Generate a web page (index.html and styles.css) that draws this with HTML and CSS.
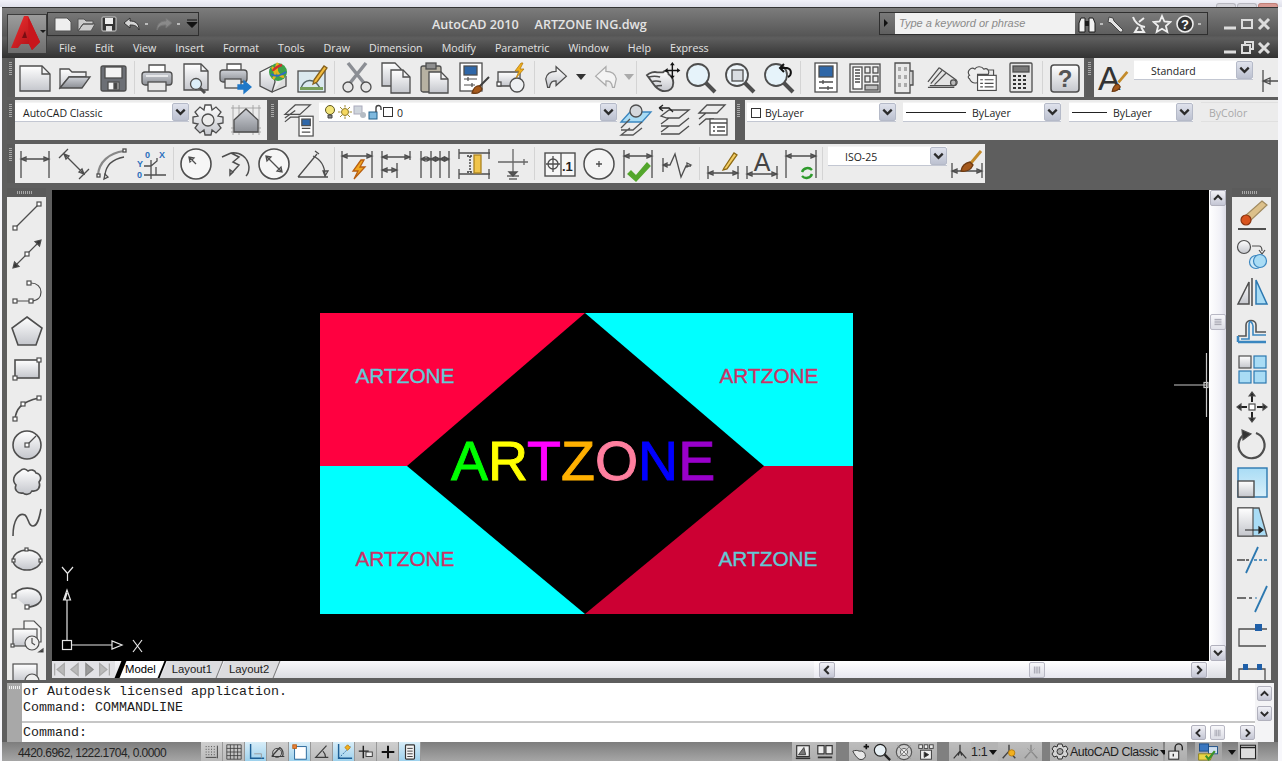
FILE: index.html
```html
<!DOCTYPE html>
<html lang="en">
<head>
<meta charset="utf-8">
<title>AutoCAD 2010 ARTZONE ING.dwg</title>
<link rel="stylesheet" href="styles.css">
</head>
<body>
<svg class="defs" width="0" height="0" aria-hidden="true">
  <defs>
    <linearGradient id="g" x1="0" y1="0" x2="0" y2="1"><stop offset="0" stop-color="#ffffff"/><stop offset="1" stop-color="#c4c6cc"/></linearGradient>
    <linearGradient id="gd" x1="0" y1="0" x2="0" y2="1"><stop offset="0" stop-color="#cfd2d8"/><stop offset="1" stop-color="#8b8e94"/></linearGradient>
    <linearGradient id="gb" x1="0" y1="0" x2="0" y2="1"><stop offset="0" stop-color="#a9dcf5"/><stop offset="1" stop-color="#d8effa"/></linearGradient>
    <linearGradient id="gr" x1="0" y1="0" x2="1" y2="1"><stop offset="0" stop-color="#f03030"/><stop offset="1" stop-color="#a30c14"/></linearGradient>
    <symbol id="cd" viewBox="0 0 16 16"><path d="M3.5 5.5L8 10l4.500-4.500" fill="none" stroke="#2b2b2b" stroke-width="2.400"/></symbol>
    <symbol id="cu" viewBox="0 0 16 16"><path d="M3.500 10L8 5.500 12.500 10" fill="none" stroke="#2b2b2b" stroke-width="2.400"/></symbol>
    <symbol id="cl" viewBox="0 0 16 16"><path d="M10 3.500L5.500 8l4.500 4.500" fill="none" stroke="#2b2b2b" stroke-width="2.400"/></symbol>
    <symbol id="cr" viewBox="0 0 16 16"><path d="M6 3.500L10.500 8 6 12.500" fill="none" stroke="#2b2b2b" stroke-width="2.400"/></symbol>
    <symbol id="th" viewBox="0 0 16 16"><path d="M5 4v8M7 4v8M9 4v8M11 4v8" fill="none" stroke="#9a9aa6" stroke-width="1"/></symbol>
    <symbol id="tv" viewBox="0 0 16 16"><path d="M4 5h8M4 7h8M4 9h8M4 11h8" fill="none" stroke="#9a9aa6" stroke-width="1"/></symbol>
  </defs>
</svg>

<div class="strip"><span class="peek"></span><span class="peek"></span><span class="peek red"></span></div>

<div class="window">
  <header class="titlebar">
    <div class="appbtn">
      <svg viewBox="0 0 40 38" width="40" height="38"><path d="M3 33L16 1h4l12 26-8 8-3-6h-8l-3 4z" fill="url(#gr)"/><path d="M20 1l12 26-8 8-3-6z" fill="#c8161c"/><path d="M14 23h5l-2-7z" fill="#7a0d12"/><path d="M32 15h6l-3 3z" fill="#1c1c1c"/></svg>
    </div>
    <div class="titlecol">
      <div class="titletop">
        <div class="qat">
          <svg viewBox="0 0 20 20" width="20" height="20"><path d="M2 4h12l4 4v9H2z" fill="#eee" stroke="#555"/></svg>
          <svg viewBox="0 0 20 20" width="20" height="20"><path d="M2 5h6l2 2h7v3H7l-5 7zM2 17l5-7h12l-4 7z" fill="#ccc" stroke="#555"/></svg>
          <svg viewBox="0 0 20 20" width="20" height="20"><rect x="3" y="3" width="14" height="14" rx="1" fill="#333" stroke="#ccc"/><rect x="6" y="4" width="8" height="6" fill="#eee"/><rect x="7" y="12" width="6" height="5" fill="#ddd"/></svg>
          <svg viewBox="0 0 20 20" width="20" height="20"><path d="M2 9l6-5v3c5 0 9 2 9 9-2-4-4-5-9-5v3z" fill="#d5d5d5" stroke="#333"/></svg>
          <span class="qdot"></span>
          <svg class="qgap" viewBox="0 0 20 20" width="20" height="20"><path d="M18 9l-6-5v3c-5 0-9 2-9 9 2-4 4-5 9-5v3z" fill="#8a8a8a" stroke="#777"/></svg>
          <span class="qdot"></span>
          <svg class="qgap" viewBox="0 0 12 20" width="12" height="20"><path d="M1 6h10M1 8.500h10l-5 5z" fill="#111" stroke="#111"/></svg>
        </div>
        <div class="doctitle"><span>AutoCAD 2010</span><span>ARTZONE ING.dwg</span></div>
        <div class="info">
          <span class="infoarrow"></span>
          <span class="infoinput">Type a keyword or phrase</span>
          <svg viewBox="0 0 20 20" width="20" height="20"><path d="M2 18V9l2-5h4v14zM12 18V4h4l2 5v9z" fill="#f2f2f2" stroke="#1c1c1c"/><path d="M8 7h4v5H8z" fill="#1c1c1c"/></svg>
          <span class="qdot"></span>
          <svg viewBox="0 0 20 20" width="20" height="20"><path d="M3 3l4 1 1 3 9 9-1 2-2 0-9-9-3-1z" fill="#e4e4e4" stroke="#444"/></svg>
          <svg viewBox="0 0 20 20" width="20" height="20"><path d="M4 3c2 6 6 9 12 10M10 8l5-4M9 13l-3 5h9l-3-5" fill="none" stroke="#eee" stroke-width="2"/></svg>
          <svg viewBox="0 0 20 20" width="20" height="20"><path d="M10 2l2.400 5.500 6 .5-4.500 4 1.400 6L10 14.800 4.700 18l1.400-6L1.600 8l6-.5z" fill="none" stroke="#f0f0f0" stroke-width="1.800"/></svg>
          <svg viewBox="0 0 20 20" width="20" height="20"><circle cx="10" cy="10" r="8" fill="#333" stroke="#eee" stroke-width="1.600"/><text x="10" y="14.500" class="qm">?</text></svg>
          <span class="qdot"></span>
        </div>
        <div class="winctl">
          <svg viewBox="0 0 14 14" width="14" height="14"><path d="M1 11h12" stroke="#ddd" stroke-width="3"/></svg>
          <svg viewBox="0 0 14 14" width="14" height="14"><rect x="2" y="3" width="10" height="8" fill="none" stroke="#ddd" stroke-width="2"/></svg>
          <svg viewBox="0 0 14 14" width="14" height="14"><path d="M2 2l10 10M12 2L2 12" stroke="#ddd" stroke-width="3"/></svg>
        </div>
      </div>
      <div class="titlebot">
        <nav class="menu"><span>File</span><span>Edit</span><span>View</span><span>Insert</span><span>Format</span><span>Tools</span><span>Draw</span><span>Dimension</span><span>Modify</span><span>Parametric</span><span>Window</span><span>Help</span><span>Express</span></nav>
        <div class="winctl low">
          <svg viewBox="0 0 14 14" width="14" height="14"><path d="M1 11h12" stroke="#ddd" stroke-width="3"/></svg>
          <svg viewBox="0 0 14 14" width="14" height="14"><path d="M5 3V1h8v7h-3M2 4h8v8H2z" fill="none" stroke="#ddd" stroke-width="2"/></svg>
          <svg viewBox="0 0 14 14" width="14" height="14"><path d="M2 2l10 10M12 2L2 12" stroke="#ddd" stroke-width="3"/></svg>
        </div>
      </div>
    </div>
  </header>

  <!-- Standard toolbar -->
  <div class="row r1">
    <span class="grip"></span>
    <div class="tb t1">
      <span class="b"><svg viewBox="0 0 32 32"><path d="M1 4h22l8 8v17H1z" fill="url(#g)"/><path d="M23 4v8h8"/></svg></span>
      <span class="b"><svg viewBox="0 0 32 32"><path d="M2 7h9l3 3h14v5H11L2 26z" fill="url(#g)"/><path d="M2 26l9-11h21l-8 11z" fill="url(#gd)"/></svg></span>
      <span class="b"><svg viewBox="0 0 32 32"><rect x="4" y="4" width="25" height="25" rx="2" fill="#6c6f75"/><rect x="8" y="5" width="17" height="11" fill="#f4f4f4"/><rect x="11" y="20" width="11" height="8" fill="#f4f4f4"/><rect x="17" y="21" width="3" height="6" fill="#444"/></svg></span>
      <span class="sep"></span>
      <span class="b"><svg viewBox="0 0 32 32"><path d="M8 10V3h16v7" fill="#fff"/><rect x="1" y="10" width="30" height="13" rx="3" fill="url(#gd)"/><rect x="7" y="20" width="18" height="9" fill="#e8e8e8"/><path d="M5 14h22" stroke="#fff"/></svg></span>
      <span class="b"><svg viewBox="0 0 32 32"><path d="M4 2h17l7 7v19H4z" fill="url(#g)"/><path d="M21 2v7h7"/><circle cx="16" cy="22" r="5.500" fill="#dceffa"/><path d="M20 26l5 5" stroke-width="3"/></svg></span>
      <span class="b"><svg viewBox="0 0 32 32"><path d="M8 8V2h14v6" fill="#fff"/><rect x="1" y="8" width="27" height="12" rx="3" fill="url(#gd)"/><rect x="6" y="17" width="16" height="9" fill="#e8e8e8"/><path d="M19 23h6v-4l7 6-7 6v-4h-6z" fill="#1f78c8" stroke="#1f78c8"/></svg></span>
      <span class="b"><svg viewBox="0 0 32 32"><path d="M2 10l12-6 3 16-3 10-12-6z" fill="url(#g)"/><path d="M14 30l14-6V14" fill="#ddd"/><circle cx="20" cy="10" r="9" fill="#3da14a" stroke="none"/><path d="M14 5c4 5 4 9 1 12M20 1c-3 5-2 12 6 14" stroke="#e5b21c" stroke-width="2.500"/><path d="M24 3c-5 1-9 5-9 6" stroke="#d0312d" stroke-width="2.500"/><path d="M13 12c5 3 9 2 15-2" stroke="#2c6cc4" stroke-width="2"/></svg></span>
      <span class="b"><svg viewBox="0 0 32 32"><rect x="1" y="9" width="27" height="21" fill="#dbe9ef"/><path d="M4 26c3-9 13-11 19 0" stroke="#566"/><rect x="3" y="25" width="23" height="3" fill="#78a05a" stroke="none"/><path d="M17 18L27 4l3 2-10 14-4 2z" fill="#f3bc3e" stroke="#85611c"/></svg></span>
      <span class="sep"></span>
      <span class="b"><svg viewBox="0 0 32 32"><path d="M25 1L9 21M7 1l16 20" stroke-width="3.500" stroke="#8b8e94"/><circle cx="7" cy="25" r="5" fill="#e5e5e5"/><circle cx="25" cy="25" r="5" fill="#e5e5e5"/></svg></span>
      <span class="b"><svg viewBox="0 0 32 32"><path d="M2 1h13l6 6v17H2z" fill="url(#g)"/><path d="M11 8h12l7 7v16H11z" fill="url(#g)"/><path d="M23 8v7h7"/></svg></span>
      <span class="b"><svg viewBox="0 0 32 32"><rect x="2" y="4" width="20" height="26" rx="2" fill="#b7b1a2"/><rect x="7" y="1" width="10" height="6" fill="#8f8f8f"/><path d="M10 10h12l7 7v14H10z" fill="url(#g)"/><path d="M22 10v7h7"/></svg></span>
      <span class="b"><svg viewBox="0 0 32 32"><rect x="2" y="1" width="22" height="28" fill="#fff"/><rect x="6" y="4" width="13" height="9" fill="#2f67a8"/><path d="M6 17h13M6 23h11M10 15v4M14 21v4" stroke-width="1.200"/><path d="M31 15L20 26" stroke="#3e3e3e" stroke-width="2"/><path d="M14 31c2-6 4-8 8-7l2 3c-2 4-6 5-10 4z" fill="#a5591c" stroke="#6e3b13"/></svg></span>
      <span class="b"><svg viewBox="0 0 32 32"><path d="M1 10h22v14H1z" fill="url(#g)"/><rect x="0" y="20" width="4" height="4" fill="#fff"/><circle cx="20" cy="23" r="7" fill="#eef0f2"/><path d="M24 1l-6 8h4l-3 7 8-9h-4l3-6z" fill="#f2b01e" stroke="#b47c10" stroke-width=".8"/></svg></span>
      <span class="sep"></span>
      <span class="b u1"><svg viewBox="0 0 32 32"><path d="M1 15c1-6 6-8 11-8V2l11 10-11 10v-5c-4 0-6 1-7 7H3z" transform="translate(3 2)" fill="url(#g)"/></svg></span>
      <span class="b u2"><svg viewBox="0 0 10 32"><path d="M0 12h10l-5 6z" fill="#333" stroke="none"/></svg></span>
      <span class="b u3"><svg viewBox="0 0 32 32"><path d="M31 15c-1-6-6-8-11-8V2L9 12l11 10v-5c4 0 6 1 7 7h2z" transform="translate(-3 2)" fill="#f4f4f4"/></svg></span>
      <span class="b u2"><svg viewBox="0 0 10 32"><path d="M0 12h10l-5 6z" fill="#aaa" stroke="none"/></svg></span>
      <span class="sep wide"></span>
      <span class="b"><svg viewBox="0 0 34 34"><path d="M1 14c3-3 8-4 11-3l6 0c2-3 6-1 6 2 3 2 5 5 5 9 0 6-4 9-9 9-4 0-7-2-10-5-3-3-5-7-9-12z" fill="url(#g)" stroke-width="2"/><path d="M3 16c4-1 8-1 12 0M6 21c3-1 6-1 10 0M10 26c2-1 4-1 7-1" stroke-width="1.600"/><path d="M28 3v12M22 9h12" stroke="#111" stroke-width="1.500"/><path d="M28 0l-2.500 3.500h5zM28 18l-2.500-3.500h5zM19.500 9l3.500-2.500v5zM36.500 9l-3.500-2.500v5z" fill="#111" stroke="none"/></svg></span>
      <span class="b"><svg viewBox="0 0 32 32"><circle cx="13" cy="13" r="11" fill="#e6f3fa" stroke-width="1.800"/><path d="M21 21l9 9" stroke-width="4"/></svg></span>
      <span class="b"><svg viewBox="0 0 32 32"><circle cx="13" cy="13" r="11" fill="#eef5fa" stroke-width="1.800"/><rect x="8" y="8" width="11" height="11" fill="#d9dde2"/><path d="M21 21l9 9" stroke-width="4"/></svg></span>
      <span class="b"><svg viewBox="0 0 32 32"><circle cx="13" cy="13" r="11" fill="#e6f3fa" stroke-width="1.800"/><path d="M21 21l9 9" stroke-width="4"/><path d="M25 15c4-2 4-8-1-9h-6M21 2l-4 4 4 4" stroke="#111" stroke-width="2"/></svg></span>
      <span class="sep wide"></span>
      <span class="b"><svg viewBox="0 0 32 32"><rect x="5" y="1" width="22" height="29" fill="#fff"/><rect x="9" y="4" width="14" height="11" fill="#2f67a8"/><path d="M9 20h14M9 26h14M13 18v4M18 24v4"/></svg></span>
      <span class="b"><svg viewBox="0 0 32 32"><rect x="1" y="2" width="30" height="28" fill="#eee"/><rect x="4" y="5" width="9" height="22" fill="#fff"/><path d="M6 8h5M6 11h5M6 14h5M6 17h5M6 20h5"/><rect x="16" y="5" width="5" height="6"/><rect x="24" y="5" width="5" height="6"/><rect x="16" y="14" width="5" height="6"/><rect x="24" y="14" width="5" height="6"/><rect x="16" y="23" width="13" height="5" fill="#bbb"/></svg></span>
      <span class="b"><svg viewBox="0 0 32 32"><path d="M7 1h15v30H7z" fill="#e9e9e9"/><path d="M22 9h3v14h-3" fill="#ccc"/><path d="M10 5h3v4h-3zM16 5h3v4h-3zM10 13h3v4h-3zM16 13h3v4h-3zM10 21h3v4h-3zM16 21h3v4h-3z" fill="#aaa" stroke="none"/></svg></span>
      <span class="b"><svg viewBox="0 0 34 32"><path d="M13 5l18 13c2 2 1 6-2 6L3 24" fill="#e4e4e4"/><path d="M1 26h28M1 20L13 5M4 22l12-14M8 23l12-12" /><circle cx="28" cy="21" r="3" fill="#bbb"/></svg></span>
      <span class="b"><svg viewBox="0 0 36 32"><path d="M4 13c-4-5 2-10 6-7 2-4 8-3 10 0 4-2 7 2 5 6l-12 0v9c-5 2-8-1-9-4-2-1-2-3 0-4z" fill="#eee"/><rect x="13" y="13" width="21" height="17" fill="#fff"/><path d="M16 18h3M21 18h10M16 22h3M21 22h10M16 26h3M21 26h10M25 7h6v6"/></svg></span>
      <span class="b"><svg viewBox="0 0 32 32"><rect x="5" y="1" width="22" height="29" rx="1" fill="#e5e5e5"/><rect x="8" y="4" width="16" height="6" fill="#777"/><path d="M8 14h3M13 14h3M18 14h3M8 18h3M13 18h3M18 18h3M8 22h3M13 22h3M18 22h3M8 26h3M13 26h3M18 26h3" stroke-width="2.200" stroke="#333"/></svg></span>
      <span class="sep"></span>
      <span class="b"><svg viewBox="0 0 32 32"><rect x="2" y="3" width="28" height="27" rx="3" fill="url(#g)" stroke-width="1.600"/><text x="16" y="25" class="help">?</text></svg></span>
    </div>
    <span class="grip g2"></span>
    <div class="tb t2">
      <span class="b stylea"><svg viewBox="0 0 36 34"><text x="0" y="30" class="biga">A</text><path d="M33 10L23 22" stroke="#c38a2a" stroke-width="3"/><path d="M16 32c1-6 3-8 7-8l2 3c-2 4-5 5-9 5z" fill="#a5591c" stroke="#6e3b13"/></svg></span>
      <div class="combo c-style"><span class="cbtext centered">Standard</span><span class="cbbtn"><svg width="16" height="16"><use href="#cd"/></svg></span></div>
      <span class="b dimcut"><svg viewBox="0 0 20 32"><path d="M2 8v22M2 19h16M2 19l7-3v6z"/></svg></span>
    </div>
  </div>

  <!-- Workspaces, Layers, Properties -->
  <div class="row r2">
    <span class="grip"></span>
    <div class="tb wk">
      <div class="combo c-work"><span class="cbtext">AutoCAD Classic</span><span class="cbbtn"><svg width="16" height="16"><use href="#cd"/></svg></span></div>
      <span class="b n32"><svg viewBox="0 0 32 32"><path d="M13 1h6l1 5 4-3 5 5-3 4 5 1v6l-5 1 3 4-5 5-4-3-1 5h-6l-1-5-4 3-5-5 3-4-5-1v-6l5-1-3-4 5-5 4 3z" fill="url(#g)"/><circle cx="16" cy="16" r="6" fill="#ececec"/></svg></span>
      <span class="b n32"><svg viewBox="0 0 32 32"><path d="M3 1v30M29 1v30M1 4h30M1 28h30M9 1v30M23 1v30M1 24h30" stroke="#999" stroke-width=".8"/><path d="M4 16L16 5l12 11v12H4z" fill="url(#gd)"/></svg></span>
    </div>
    <span class="grip g3"></span>
    <div class="tb ly">
      <span class="b lyicon"><svg viewBox="0 0 34 34"><path d="M2 11L13 1h16L18 11zM2 15l11-8M2 19l6-5h10" fill="#eee"/><rect x="17" y="13" width="15" height="21" fill="#fff"/><rect x="20" y="16" width="9" height="7" fill="#2f67a8"/><path d="M20 26h9M20 30h9"/></svg></span>
      <div class="combo c-layer"><span class="cbicons">
        <svg viewBox="0 0 14 16" width="14" height="16"><circle cx="7" cy="6" r="4.500" fill="#f3e57a" stroke="#5e5620"/><path d="M5 11h4v3H5z" fill="#888" stroke="#444"/></svg>
        <svg viewBox="0 0 14 14" width="14" height="16"><circle cx="7" cy="7" r="3.500" fill="#f6d860" stroke="#8e7a2a"/><path d="M7 0v2.500M7 11.500V14M0 7h2.500M11.500 7H14M2 2l2 2M10 10l2 2M12 2l-2 2M4 10l-2 2" stroke="#a08a30"/></svg>
        <svg viewBox="0 0 14 14" width="14" height="16"><rect x="1" y="1" width="8" height="8" fill="#cfd5dc" stroke="#aab"/><circle cx="10" cy="10" r="3" fill="#b5bcc4"/></svg>
        <svg viewBox="0 0 14 16" width="14" height="16"><rect x="1" y="8" width="8" height="7" fill="#7fb9de" stroke="#23608a"/><path d="M8 8V4a2.500 2.500 0 0 1 5 0v2" fill="none" stroke="#444" stroke-width="1.400"/></svg>
        <span class="swatch"></span><span class="cbtext zero">0</span></span><span class="cbbtn"><svg width="16" height="16"><use href="#cd"/></svg></span></div>
      <span class="b n32"><svg viewBox="0 0 32 32"><path d="M1 18L10 8h21l-9 10z" fill="#a9dcf5" stroke="#3b87c0"/><circle cx="16" cy="7" r="6" fill="#d5d8dc"/><path d="M1 24l9-9M22 18l-9 8H1M22 24l-9 7H1l9-7" stroke="#555"/></svg></span>
      <span class="b n32"><svg viewBox="0 0 32 32"><path d="M3 12l8-6h20l-10 8H9zM3 20l8-6M31 14l-10 8H9l-6 0M3 28l8-6M31 22l-10 8H3"/><path d="M1 4l4-3M1 4l4 3M1 4h10l4 4" stroke="#222"/></svg></span>
      <span class="b n32"><svg viewBox="0 0 32 32"><path d="M3 9l8-8h18l-8 8zM3 15l7-6M3 21l7-6h8"/><rect x="14" y="15" width="17" height="16" fill="#fff"/><path d="M14 19h17M17 23h2M21 23h8M17 27h2M21 27h8"/></svg></span>
    </div>
    <span class="grip g4"></span>
    <div class="tb pr">
      <div class="combo c-color"><span class="cbtext"><span class="swatch"></span>ByLayer</span><span class="cbbtn"><svg width="16" height="16"><use href="#cd"/></svg></span></div>
      <div class="combo c-lt"><span class="cbtext lw"><i class="ln l1"></i>ByLayer</span><span class="cbbtn"><svg width="16" height="16"><use href="#cd"/></svg></span></div>
      <div class="combo c-lw"><span class="cbtext lw"><i class="ln l2"></i>ByLayer</span><span class="cbbtn"><svg width="16" height="16"><use href="#cd"/></svg></span></div>
      <div class="combo c-plot"><span class="cbtext">ByColor</span></div>
    </div>
  </div>

  <!-- Dimension toolbar -->
  <div class="row r3">
    <span class="grip"></span>
    <div class="tb dm">
      <span class="b"><svg viewBox="0 0 32 32"><path d="M2 3v27M30 3v27M2 11h28M2 11l5-2v4zM30 11l-5-2v4z"/></svg></span>
      <span class="b"><svg viewBox="0 0 32 32"><path d="M1 10L10 1M21 31l10-10M6 6l20 20M6 6l2 5 3-3zM26 26l-2-5-3 3z"/></svg></span>
      <span class="b"><svg viewBox="0 0 32 32"><path d="M1 27C2 14 12 5 27 3" stroke-width="2.200" stroke="#888"/><path d="M8 27C9 17 16 11 27 9"/><path d="M7 31l1-5 3 3z"/><rect x="0" y="26" width="3" height="3" fill="#fff"/><rect x="26" y="1" width="3" height="3" fill="#fff"/></svg></span>
      <span class="b"><svg viewBox="0 0 32 32"><text x="9" y="10" class="ordb">0</text><text x="23" y="10" class="ordb">X</text><text x="1" y="19" class="ordb">Y</text><text x="1" y="30" class="ordb">0</text><path d="M8 27h22M15 12v19M8 18h7l6-5v-3M20 27v-8"/></svg></span>
      <span class="sep"></span>
      <span class="b"><svg viewBox="0 0 32 32"><circle cx="16" cy="16" r="15" fill="#f6f6f6" stroke-width="1.600"/><path d="M16 16L9 9M9 9l1 5 4-4z"/></svg></span>
      <span class="b"><svg viewBox="0 0 32 32"><path d="M12 5c9-1 17 4 18 14 0 3-1 7-3 9M3 9l9-4M12 5l8 4-6 5 6 3-9 10M11 27l0-5 3 2z" stroke-width="1.500"/></svg></span>
      <span class="b"><svg viewBox="0 0 32 32"><circle cx="16" cy="16" r="15" fill="#f6f6f6" stroke-width="1.600"/><path d="M8 8l16 16M8 8l1 5 4-4zM24 24l-1-5-4 4z"/></svg></span>
      <span class="b"><svg viewBox="0 0 32 32"><path d="M1 29h30M1 29L20 6M18 3l4 3M16 8c9 4 12 11 12 20M28 28l-2-5h5z" /></svg></span>
      <span class="sep"></span>
      <span class="b"><svg viewBox="0 0 32 32"><path d="M1 3v27M31 3v27M1 8h30M1 8l5-2v4zM31 8l-5-2v4z"/><path d="M20 12l-8 11h5l-4 8 11-12h-5l4-7z" fill="#f2a71e" stroke="#b85e10"/></svg></span>
      <span class="b"><svg viewBox="0 0 32 32"><path d="M2 3v27M30 3v9M17 15v15M2 9h28M2 22h15M2 9l5-2v4zM30 9l-5-2v4zM2 22l5-2v4zM17 22l-5-2v4z"/></svg></span>
      <span class="b"><svg viewBox="0 0 32 32"><path d="M2 3v27M12 3v27M21 3v27M30 3v27M2 11h28M2 11l4-2v4zM12 11l-4-2v4zM12 11l4-2v4zM21 11l-4-2v4zM21 11l4-2v4zM30 11l-4-2v4z"/></svg></span>
      <span class="b"><svg viewBox="0 0 32 32"><path d="M1 1v10M31 1v10M1 21v10M31 21v10M1 5h31M1 26h31"/><path d="M9 8h6M12 8v16M9 24h6" stroke="#333" stroke-dasharray="2 1"/><rect x="16" y="7" width="7" height="18" fill="#f0c44a" stroke="#ad8420"/></svg></span>
      <span class="b"><svg viewBox="0 0 32 32"><path d="M1 14h30M16 1v27M10 28h12M12 31h8M27 11v6" stroke="#666"/><path d="M12 24h8l-4 4z" fill="#555"/></svg></span>
      <span class="sep toler"></span>
      <span class="b"><svg viewBox="0 0 32 32"><rect x="1" y="5" width="30" height="23" fill="#f7f7f7" stroke-width="1.400"/><path d="M17 5v23"/><circle cx="9" cy="16" r="5"/><path d="M2 16h14M9 8v16"/><text x="18" y="23" class="dot1">.1</text></svg></span>
      <span class="b"><svg viewBox="0 0 32 32"><circle cx="16" cy="16" r="15" fill="#f4f4f4" stroke-width="1.500"/><path d="M13 16h6M16 13v6"/></svg></span>
      <span class="b"><svg viewBox="0 0 32 32"><path d="M2 2v28M30 2v28M2 8h28M2 8l5-2v4zM30 8l-5-2v4z"/><path d="M9 23l5 5 11-13 3 3-14 15-8-7z" fill="#53a62c" stroke="#53a62c"/></svg></span>
      <span class="b"><svg viewBox="0 0 32 32"><path d="M2 10v14M2 17l4-2v4zM2 17h7l5-11 6 23 5-11h5M30 17l-4-2v4z" stroke-width="1.300"/></svg></span>
      <span class="sep seped"></span>
      <span class="b"><svg viewBox="0 0 32 32"><path d="M1 18v13M31 18v13M1 25h30M1 25l5-2v4zM31 25l-5-2v4z"/><path d="M17 20L27 5l3 2-10 14-4 1z" fill="#f3cd64" stroke="#8e6a14"/></svg></span>
      <span class="b"><svg viewBox="0 0 32 32"><path d="M1 18v13M31 18v13M1 26h30M1 26l5-2v4zM31 26l-5-2v4z"/><text x="16" y="23" class="dimA">A</text></svg></span>
      <span class="b"><svg viewBox="0 0 32 32"><path d="M1 2v28M31 2v28M1 8h30M1 8l5-2v4zM31 8l-5-2v4z"/><path d="M17 24a6 6 0 0 1 10-2M27 26a6 6 0 0 1-10 2" stroke="#2f9a2c" stroke-width="2.400"/></svg></span>
      <span class="sep wide"></span>
      <div class="combo c-dim"><span class="cbtext centered2">ISO-25</span><span class="cbbtn"><svg width="16" height="16"><use href="#cd"/></svg></span></div>
      <span class="b brushd"><svg viewBox="0 0 32 32"><path d="M1 15v15M31 15v15M1 23h30M1 23l5-2v4zM31 23l-5-2v4z"/><path d="M30 3L20 15" stroke="#c38a2a" stroke-width="3"/><path d="M10 23c1-6 4-8 9-9l3 3c-2 5-7 7-12 6z" fill="#a5591c" stroke="#6e3b13"/></svg></span>
    </div>
  </div>

  <!-- Workspace -->
  <main class="main">
    <aside class="vbar">
      <span class="vgrip"></span>
      <span class="v"><svg viewBox="0 0 32 32"><path d="M4 28L28 4"/><rect x="2" y="26" width="4" height="4" fill="#fff"/><rect x="26" y="2" width="4" height="4" fill="#fff"/></svg></span>
      <span class="v"><svg viewBox="0 0 32 32"><path d="M4 28L28 4"/><path d="M2 30l1.500-6 4.500 4.500zM30 2l-1.500 6L24 3.500z" fill="#333"/><rect x="14" y="14" width="4" height="4" fill="#fff"/></svg></span>
      <span class="v"><svg viewBox="0 0 32 32"><path d="M4 25h16c7 0 10-4 10-9 0-5-4-9-10-9h-2"/><rect x="2" y="23" width="4" height="4" fill="#fff"/><rect x="18" y="23" width="4" height="4" fill="#fff"/><rect x="16" y="5" width="4" height="4" fill="#fff"/></svg></span>
      <span class="v"><svg viewBox="0 0 32 32"><path d="M16 2l15 11-6 17H7L1 13z" fill="url(#g)" stroke-width="1.600"/></svg></span>
      <span class="v"><svg viewBox="0 0 32 32"><rect x="4" y="7" width="24" height="18" fill="url(#g)" stroke-width="1.600"/><rect x="2" y="23" width="4" height="4" fill="#fff"/><rect x="26" y="5" width="4" height="4" fill="#fff"/></svg></span>
      <span class="v"><svg viewBox="0 0 32 32"><path d="M4 28C5 19 9 11 28 7" stroke-width="1.600"/><rect x="2" y="26" width="4" height="4" fill="#fff"/><rect x="26" y="5" width="4" height="4" fill="#fff"/><rect x="10" y="11" width="4" height="4" fill="#fff"/></svg></span>
      <span class="v"><svg viewBox="0 0 32 32"><circle cx="16" cy="16" r="14" fill="url(#g)" stroke-width="1.600"/><path d="M16 16l9-9"/><rect x="14" y="14" width="4" height="4" fill="#fff"/></svg></span>
      <span class="v"><svg viewBox="0 0 32 32"><path d="M9 4c3-3 6-2 8 0 3-2 7-1 8 2 5 1 6 6 3 9 2 5-1 10-7 9-2 4-7 4-9 2-6 1-9-4-7-8-4-4-3-10 4-14z" fill="url(#g)" stroke-width="1.600"/></svg></span>
      <span class="v"><svg viewBox="0 0 32 32"><path d="M2 30C2 14 8 6 14 9c4 3 3 11 8 11 4 0 6-6 8-17" stroke-width="1.600"/></svg></span>
      <span class="v"><svg viewBox="0 0 32 32"><ellipse cx="16" cy="16" rx="14" ry="10" fill="url(#g)" stroke-width="1.600"/><rect x="14" y="4" width="3" height="3" fill="#fff"/><rect x="1" y="15" width="3" height="3" fill="#fff"/><rect x="28" y="15" width="3" height="3" fill="#fff"/></svg></span>
      <span class="v"><svg viewBox="0 0 32 32"><path d="M3 14C5 4 27 3 30 14c2 6-5 11-14 11" fill="url(#g)" stroke-width="1.600"/><rect x="1" y="12" width="4" height="4" fill="#fff"/><rect x="14" y="23" width="4" height="4" fill="#fff"/></svg></span>
      <span class="v"><svg viewBox="0 0 32 32"><path d="M13 1h10l7 7v14H13z" fill="#f4f4f4"/><rect x="2" y="9" width="24" height="17" fill="url(#g)"/><circle cx="21" cy="23" r="7" fill="#eee"/><path d="M21 18v5l3 2"/><rect x="0" y="24" width="3" height="3" fill="#fff"/><path d="M32 29v3h-4z" fill="#222"/></svg></span>
      <span class="v"><svg viewBox="0 0 32 32"><rect x="2" y="6" width="24" height="18" fill="url(#g)"/><circle cx="21" cy="23" r="7" fill="#eee"/></svg></span>
    </aside>

    <section class="center">
      <div class="canvasrow">
        <div class="canvas">
          <svg class="drawing" viewBox="52 190 1157 471" width="1157" height="471">
            <rect x="320" y="313" width="533" height="301" fill="#000"/>
            <polygon points="320,313 585,313 407,466 320,466" fill="#ff0040"/>
            <polygon points="585,313 853,313 853,466 764,466" fill="#00ffff"/>
            <polygon points="320,466 407,466 585,614 320,614" fill="#00ffff"/>
            <polygon points="764,466 853,466 853,614 585,614" fill="#cc0033"/>
            <text class="small tealt" x="355.500" y="382.800">ARTZONE</text>
            <text class="small roset" x="719.500" y="382.800">ARTZONE</text>
            <text class="small roset" x="355.500" y="565.800">ARTZONE</text>
            <text class="small tealt" x="718.500" y="565.800">ARTZONE</text>
            <text class="big" x="451" y="480"><tspan class="la1">A</tspan><tspan class="la2">R</tspan><tspan class="la3">T</tspan><tspan class="la4">Z</tspan><tspan class="la5">O</tspan><tspan class="la6">N</tspan><tspan class="la7">E</tspan></text>
            <g class="ucs">
              <rect x="62.500" y="640.500" width="9" height="9"/>
              <path d="M67 640V600M71.500 645H112M67 590l-3.500 10h7zM67 593l-2 7h4M112 641v8l10-4zM62 567l5.500 6.500L73 567M67.500 573.500V581M133 640l9 12M142 640l-9 12"/>
            </g>
            <g class="cross"><path d="M1174 385h33M1206.500 353v64"/><rect x="1204" y="382.500" width="4" height="5"/></g>
          </svg>
        </div>
        <div class="vscroll">
          <span class="sb"><svg width="16" height="16"><use href="#cu"/></svg></span>
          <span class="thumb tv1"><svg width="16" height="16"><use href="#tv"/></svg></span>
          <span class="sb"><svg width="16" height="16"><use href="#cd"/></svg></span>
        </div>
      </div>
      <div class="tabrow">
        <div class="tabnav">
          <svg viewBox="0 0 12 14" width="15" height="17"><path d="M2 2v10M10 2L4 7l6 5z" fill="#b9b9b9" stroke="#a8a8a8"/></svg>
          <svg viewBox="0 0 12 14" width="15" height="17"><path d="M9 2L3 7l6 5z" fill="#b9b9b9" stroke="#a8a8a8"/></svg>
          <svg viewBox="0 0 12 14" width="15" height="17"><path d="M3 2l6 5-6 5z" fill="#9b9b9b" stroke="#8a8a8a"/></svg>
          <svg viewBox="0 0 12 14" width="15" height="17"><path d="M10 2v10M2 2l6 5-6 5z" fill="#b9b9b9" stroke="#a8a8a8"/></svg>
        </div>
        <div class="tabs">
          <span class="tab active">Model</span>
          <span class="tab">Layout1</span>
          <span class="tab">Layout2</span>
        </div>
        <div class="hscroll">
          <span class="sb"><svg width="16" height="16"><use href="#cl"/></svg></span>
          <span class="thumb th1"><svg width="16" height="16"><use href="#th"/></svg></span>
          <span class="sb"><svg width="16" height="16"><use href="#cr"/></svg></span>
        </div>
        <span class="corner"></span>
      </div>
    </section>

    <aside class="vbar">
      <span class="vgrip"></span>
      <span class="v"><svg viewBox="0 0 32 32"><path d="M26 1l5 4-17 16-5-5z" fill="#dcc08a" stroke="#a08a60"/><circle cx="10" cy="20" r="5" fill="#d9541e" stroke="#8a3410"/><path d="M2 29h28" stroke-width="2"/></svg></span>
      <span class="v"><svg viewBox="0 0 32 32"><circle cx="8" cy="9" r="6.500" fill="url(#g)"/><path d="M16 8h7c2 0 3 2 3 5M23 12l3 4 3-4"/><circle cx="20" cy="24" r="6.500" fill="#cde9f8" stroke="#3b87c0"/><circle cx="24" cy="23" r="6.500" fill="#a9dcf5" stroke="#3b87c0"/></svg></span>
      <span class="v"><svg viewBox="0 0 32 32"><path d="M16 2v28" stroke="#222"/><path d="M13 6v22H2z" fill="url(#g)" stroke-width="1.500"/><path d="M20 4v24h11z" fill="#a9dcf5" stroke="#2c78b0" stroke-width="1.500"/></svg></span>
      <span class="v"><svg viewBox="0 0 32 32"><path d="M2 21h8V10c0-6 10-6 10 0v7h10" stroke="#555" stroke-width="1.600"/><path d="M2 27h28M2 21v6" stroke="#3b87c0" stroke-width="2.500"/><path d="M5 24h8V11c0-9 4-2 4 0v9h13" stroke="#3b87c0" stroke-width="1.600"/></svg></span>
      <span class="v"><svg viewBox="0 0 32 32"><rect x="3" y="3" width="12" height="12" fill="url(#g)"/><rect x="18" y="3" width="12" height="12" fill="#a9dcf5" stroke="#2c78b0"/><rect x="3" y="18" width="12" height="12" fill="#a9dcf5" stroke="#2c78b0"/><rect x="18" y="18" width="12" height="12" fill="#a9dcf5" stroke="#2c78b0"/></svg></span>
      <span class="v"><svg viewBox="0 0 32 32"><rect x="13" y="13" width="6" height="6" fill="#fff"/><path d="M16 11V4M16 21v7M11 16H4M21 16h7" stroke="#222" stroke-width="2"/><path d="M13 5l3-4 3 4zM13 27l3 4 3-4zM5 13l-4 3 4 3zM27 13l4 3-4 3z" fill="#222"/></svg></span>
      <span class="v"><svg viewBox="0 0 32 32"><path d="M20 4A13 13 0 1 1 9 5" stroke-width="2.200"/><path d="M6 1l9 4-8 6z" fill="#333"/></svg></span>
      <span class="v"><svg viewBox="0 0 32 32"><rect x="2" y="1" width="29" height="29" fill="url(#gb)" stroke="#2c78b0" stroke-width="1.400"/><rect x="2" y="14" width="16" height="16" fill="url(#g)" stroke-width="1.400"/></svg></span>
      <span class="v"><svg viewBox="0 0 32 32"><path d="M2 2h21l8 28H2z" fill="#a9dcf5" stroke="#555" stroke-width="1.400"/><path d="M2 2h15v28H2z" fill="url(#g)" stroke="#555"/><path d="M9 24h14M23 21l4 3-4 3z" stroke="#222" fill="#222"/></svg></span>
      <span class="v"><svg viewBox="0 0 32 32"><path d="M1 16h8M10 16h3" stroke="#444" stroke-width="1.400"/><path d="M18 16h3M23 16h3M28 16h3" stroke="#2c78b0" stroke-width="1.400"/><path d="M10 29L22 3" stroke="#2c78b0" stroke-width="1.800"/></svg></span>
      <span class="v"><svg viewBox="0 0 32 32"><path d="M1 16h9M13 16h3" stroke="#444" stroke-width="1.400"/><path d="M19 16h2" stroke="#2c78b0"/><path d="M19 30L31 4" stroke="#2c78b0" stroke-width="1.800"/></svg></span>
      <span class="v"><svg viewBox="0 0 32 32"><path d="M31 9H3v17h27" stroke-width="1.300" /><rect x="19" y="4" width="7" height="7" fill="#1f5fa8" stroke="none"/></svg></span>
      <span class="v"><svg viewBox="0 0 32 32"><path d="M3 32V11h26v21" stroke-width="1.300"/><rect x="7" y="6" width="5" height="6" fill="#1f5fa8" stroke="none"/><rect x="21" y="6" width="5" height="6" fill="#1f5fa8" stroke="none"/></svg></span>
    </aside>
  </main>

  <!-- Command window -->
  <section class="cmd">
    <span class="cmdgrip"></span>
    <div class="cmdbody">
      <div class="cmdhist">
        <p>or Autodesk licensed application.</p>
        <p>Command: COMMANDLINE</p>
      </div>
      <div class="cmdline">
        <p>Command:</p>
        <div class="cmdh">
          <span class="sb sm"><svg width="14" height="14" viewBox="0 0 16 16"><use href="#cl"/></svg></span>
          <span class="thumb th2"><svg width="14" height="14" viewBox="0 0 16 16"><use href="#th"/></svg></span>
          <span class="sb sm"><svg width="14" height="14" viewBox="0 0 16 16"><use href="#cr"/></svg></span>
        </div>
      </div>
    </div>
    <div class="cmdv">
      <span class="sb sm"><svg width="14" height="14" viewBox="0 0 16 16"><use href="#cu"/></svg></span>
      <span class="sb sm"><svg width="14" height="14" viewBox="0 0 16 16"><use href="#cd"/></svg></span>
    </div>
  </section>

  <!-- Status bar -->
  <footer class="status">
    <span class="coords">4420.6962, 1222.1704, 0.0000</span>
    <div class="sgroup">
      <span class="s"><svg viewBox="0 0 20 20"><path d="M3 4h1M6 4h1M9 4h1M12 4h1M3 7h1M6 7h1M9 7h1M12 7h1M3 10h1M6 10h1M9 10h1M12 10h1M3 13h1M6 13h1M9 13h1M12 13h1M3 16h12M16 3v14"/></svg></span>
      <span class="s"><svg viewBox="0 0 20 20"><path d="M2 2h16v16H2zM2 6h16M2 10h16M2 14h16M6 2v16M10 2v16M14 2v16" stroke-width=".9"/></svg></span>
      <span class="s on"><svg viewBox="0 0 20 20"><path d="M4 1v16h15" stroke="#1d5f95" stroke-width="1.600"/><path d="M8 12h8v5" stroke="#999"/></svg></span>
      <span class="s"><svg viewBox="0 0 20 20"><path d="M3 15l9-10M3 15h14M12 5a8 8 0 0 1 3 10" stroke-width="1.300"/><circle cx="9" cy="11" r="5"/></svg></span>
      <span class="s on"><svg viewBox="0 0 20 20"><rect x="4" y="4" width="13" height="14" fill="#fff" stroke="#1d5f95"/><rect x="2" y="2" width="4" height="4" fill="#e8803c" stroke="#b85e10"/></svg></span>
      <span class="s"><svg viewBox="0 0 20 20"><path d="M15 3L3 16h14M11 9c2 2 3 4 3 7" stroke-width="1.300"/></svg></span>
      <span class="s on"><svg viewBox="0 0 20 20"><path d="M4 1v16h15" stroke="#1d5f95" stroke-width="1.600"/><path d="M4 17L17 4" stroke="#1d5f95" stroke-dasharray="2 1.500"/><path d="M14 2l3 3-3 3-3-3z" fill="#f2b01e" stroke="#b47c10"/></svg></span>
      <span class="s"><svg viewBox="0 0 20 20"><path d="M7 3v14M2 9h11" stroke="#222" stroke-width="1.600"/><rect x="10" y="10" width="7" height="5" fill="#eee" stroke="#333"/></svg></span>
      <span class="s"><svg viewBox="0 0 20 20"><path d="M10 3v14M3 10h14" stroke="#111" stroke-width="2.200"/></svg></span>
      <span class="s on"><svg viewBox="0 0 20 20"><rect x="5" y="2" width="10" height="16" rx="1" fill="#f4f4f4" stroke="#333" stroke-width="1.300"/><path d="M7 6h6M7 9h6M7 12h6M7 15h6" stroke="#333"/></svg></span>
    </div>
    <div class="sright">
      <span class="s m"><svg viewBox="0 0 20 20"><rect x="3" y="3" width="14" height="12" fill="#eee" stroke="#333" stroke-width="1.300"/><path d="M5 13l6-8 2 8z" fill="#777"/><path d="M2 17h16" stroke="#333" stroke-width="1.800"/></svg></span>
      <span class="s m"><svg viewBox="0 0 20 20"><path d="M2 3h7v9H2zM11 3h7v9h-7z" fill="#eee" stroke="#333" stroke-width="1.300"/><path d="M2 16h16" stroke="#333" stroke-width="2"/></svg></span>
      <span class="gapd g13"></span>
      <span class="s m"><svg viewBox="0 0 20 20"><path d="M2 9c3-1 5-1 7 0h3c3 1 4 3 4 6-1 3-4 4-7 3-3-2-5-5-7-9z" fill="#e8e8e8" stroke="#333"/><path d="M14 4h6M17 1v6" stroke="#111" stroke-width="1.800"/></svg></span>
      <span class="s m"><svg viewBox="0 0 20 20"><circle cx="8" cy="8" r="6.500" fill="#e8f1f6" stroke="#222" stroke-width="1.300"/><path d="M13 13l6 6" stroke="#222" stroke-width="2.600"/></svg></span>
      <span class="s m"><svg viewBox="0 0 20 20"><circle cx="10" cy="10" r="8.500" fill="#cfcfcf" stroke="#555" stroke-width="1.300"/><circle cx="10" cy="10" r="4" fill="#eee" stroke="#555"/><path d="M3 3l14 14M17 3L3 17" stroke="#777"/></svg></span>
      <span class="s m"><svg viewBox="0 0 20 20"><rect x="2" y="2" width="4" height="4" fill="#eee"/><rect x="8" y="2" width="4" height="4" fill="#eee"/><rect x="14" y="2" width="4" height="4" fill="#eee"/><rect x="4" y="8" width="12" height="10" fill="#eee" stroke="#333"/><path d="M8 10l5 3-5 3z" fill="#222"/></svg></span>
      <span class="gapd g12"></span>
      <span class="s m"><svg viewBox="0 0 20 20"><path d="M10 2v7M10 9l-7 8M10 9l7 8M8 14l2-5 2 5" stroke="#333" stroke-width="1.300"/></svg></span>
      <span class="scale">1:1<i class="tri"></i></span>
      <span class="s m"><svg viewBox="0 0 20 20"><path d="M10 2v7M10 9l-7 8M10 9l7 8" stroke="#444" stroke-width="1.600"/><circle cx="13" cy="11" r="3.500" fill="#f2b01e" stroke="#b47c10"/></svg></span>
      <span class="s m"><svg viewBox="0 0 20 20"><path d="M10 2v7M10 9l-7 8M10 9l7 8" stroke="#888" stroke-width="1.600"/><path d="M6 6l8 8M14 6l-8 8" stroke="#999"/></svg></span>
      <span class="gapd g8"></span>
      <span class="wsname"><svg viewBox="0 0 20 20" width="20" height="20"><path d="M8 1h4l1 3 3-1 2 3-2 2 2 3-2 3-3-1-1 3H8l-1-3-3 1-2-3 2-3-2-2 2-3 3 1z" fill="#d4d4d4" stroke="#333" transform="translate(0 1)"/><circle cx="10" cy="9.500" r="3" fill="#aaa" stroke="#333"/></svg>AutoCAD Classic<i class="tri"></i></span>
      <span class="s m lock"><svg viewBox="0 0 20 20"><rect x="2" y="9" width="11" height="9" fill="#eee" stroke="#333" stroke-width="1.200"/><path d="M9 9V5a4 4 0 0 1 8 0v3" stroke="#222" stroke-width="1.500"/><path d="M7 12v3" stroke="#333" stroke-width="1.500"/></svg></span>
      <span class="tray"><svg viewBox="0 0 30 22" width="27" height="20"><rect x="5" y="2" width="10" height="8" fill="#3a77c0" stroke="#174a85"/><rect x="15" y="5" width="10" height="8" fill="#cfdfee" stroke="#174a85"/><path d="M4 13h16l-3 7H4z" fill="#e8d447" stroke="#8b7f1a"/><path d="M12 15l3 4 7-9" stroke="#38922a" stroke-width="2.400" fill="none"/></svg></span>
      <i class="tri dark"></i>
      <span class="s m clean"><svg viewBox="0 0 24 24"><rect x="2" y="3" width="20" height="18" fill="#ddd" stroke="#222" stroke-width="1.400"/><path d="M2 6h20" stroke="#222" stroke-width="2"/></svg></span>
      <span class="sizegrip"></span>
    </div>
  </footer>
</div>
</body>
</html>
```

FILE: styles.css
```css
* { box-sizing: border-box; }
html, body { margin: 0; padding: 0; height: 100%; overflow: hidden; }
body { background: #f7f7fb; font-family: "Open Sans", "Liberation Sans", sans-serif; width: 1282px; height: 761px; }
.defs { display: block; height: 0; }
p { margin: 0; }
i { font-style: normal; }

.strip { height: 7px; background: linear-gradient(#f1f1f8, #dfe0ea); display: flex; justify-content: flex-end; padding-top: 3px; padding-right: 4px; gap: 1px; }
.peek { width: 20px; height: 4px; background: #d5d5db; border: 1px solid #b8b8c0; border-bottom: 0; border-radius: 3px 3px 0 0; }
.peek.red { background: #d99a94; border-color: #c08078; }

.window { margin-left: 2px; width: 1276px; height: 754px; background: #5e5e5e; display: flex; flex-direction: column; }

/* title bar */
.titlebar { height: 51px; display: flex; padding-left: 5px; background: linear-gradient(#7c7c7c 0, #565656 55%, #5e5e5e 60%, #323232 100%); border-top: 1px solid #333; }
.appbtn { width: 40px; height: 40px; margin-top: 6px; background: linear-gradient(#9c9c9c, #6e6e6e); border: 1px solid #3c3c3c; flex: none; }
.appbtn svg { display: block; }
.titlecol { flex: 1; display: flex; flex-direction: column; min-width: 0; }
.titletop { display: flex; align-items: center; height: 30px; padding-top: 1px; }
.titlebot { display: flex; align-items: center; height: 20px; }
.qat { display: flex; align-items: center; gap: 3px; width: 152px; height: 24px; padding-left: 5px; border: 1px solid #2f2f2f; background: linear-gradient(#777, #5a5a5a); flex: none; }
.qgap { margin-left: 3px; }
.qdot { width: 3px; height: 2px; background: #bbb; flex: none; }
.doctitle { margin-left: 233px; width: 215px; flex: none; display: flex; gap: 16px; font: 600 12.600px "Open Sans", sans-serif; color: #e4e4e4; white-space: nowrap; padding-top: 2px; }
.info { margin-left: 232px; width: 329px; height: 23px; display: flex; align-items: center; gap: 3px; background: linear-gradient(#7a7a7a, #5f5f5f); border: 1px solid #2f2f2f; flex: none; }
.infoarrow { width: 12px; height: 100%; position: relative; flex: none; }
.infoarrow::after { content: ""; position: absolute; left: 4px; top: 6px; border-left: 4px solid #111; border-top: 4px solid transparent; border-bottom: 4px solid transparent; }
.infoinput { width: 180px; height: 21px; background: #f1f1f1; color: #8a8a8a; font: italic 11px/21px "Liberation Sans", sans-serif; padding-left: 4px; flex: none; margin-right: -1px; }
.qm { font: 700 13px "Liberation Sans", sans-serif; fill: #fff; stroke: none; text-anchor: middle; }
.winctl { margin-left: auto; display: flex; gap: 3px; width: 56px; padding-right: 7px; flex: none; justify-content: flex-end; }
.winctl.low { margin-left: auto; }
.menu { display: flex; gap: 19px; padding-left: 12px; color: #e2e2e2; font: 10.700px "Open Sans", sans-serif; margin-top: -1px; }

/* toolbars */
.row { display: flex; padding-left: 5px; flex: none; }
.r1 { height: 39px; margin-bottom: 3px; }
.r2 { height: 40px; margin-bottom: 4px; }
.r3 { height: 39px; }
.grip { width: 8px; background: #5b5b5b; flex: none; padding: 4px 2px; }
.grip::before { content: ""; display: block; width: 3px; height: 14px; background: repeating-linear-gradient(#a8a8a8 0 1px, transparent 1px 2px); }
.grip.g2 { margin-left: 2px; width: 8px; }
.grip.g3 { margin-left: 2px; width: 9px; }
.grip.g4 { width: 10px; }
.tb { display: flex; background: #ececec; flex: none; }
.t1 { width: 1069px; }
.t2 { flex: 1; width: 184px; overflow: hidden; }
.wk { width: 252px; }
.ly { width: 457px; }
.pr { width: 533px; overflow: hidden; }
.dm { width: 970px; }
.b { width: 39px; height: 39px; display: flex; align-items: center; justify-content: center; flex: none; }
.b svg { width: 32px; height: 32px; fill: none; stroke: #4e4e4e; stroke-width: 1.300; display: block; overflow: visible; }
.sep { width: 5px; flex: none; position: relative; }
.sep::after { content: ""; position: absolute; left: 2px; top: 3px; bottom: 3px; width: 1px; background: #d4d4d4; }
.sep.wide { width: 8px; }
.sep.toler { width: 8.500px; }
.sep.seped { width: 6.500px; }
.u1 { width: 39px; }
.u1 svg { width: 30px; height: 30px; }
.u2 { width: 10px; }
.u2 svg { width: 10px; height: 32px; }
.u3 { width: 38px; }
.u3 svg { width: 30px; height: 30px; stroke: #aaa; }
.help { font: 700 24px "Liberation Sans", sans-serif; fill: #555; stroke: none; text-anchor: middle; }
.biga { font: 38px "Liberation Sans", sans-serif; fill: #333; stroke: none; }
.stylea { width: 40px; }
.ordb { font: 700 9px "Liberation Sans", sans-serif; fill: #2a6fbc; stroke: none; }
.dot1 { font: 700 13px "Liberation Sans", sans-serif; fill: #222; stroke: none; }
.dimA { font: 25px "Liberation Sans", sans-serif; fill: #444; stroke: none; text-anchor: middle; }
.n32 { width: 38px; }

/* combos */
.combo { height: 20px; display: flex; align-items: stretch; background: #fff; border-bottom: 1px solid #c3c7d2; border-top: 1px solid #f4f4f4; margin-top: 2px; flex: none; font: 10.500px "Open Sans", sans-serif; color: #1d1d1d; }
.cbtext { flex: 1; display: flex; align-items: center; padding-left: 8px; padding-top: 1px; white-space: nowrap; min-width: 0; }
.cbbtn { width: 17px; background: linear-gradient(#dfe2ec, #bcc1d0); border: 1px solid #b5bac8; display: flex; align-items: center; justify-content: center; flex: none; border-radius: 2px; }
.cbbtn svg { display: block; }
.c-style { width: 119px; }
.centered { padding-left: 17px; }
.dimcut { width: 30px; margin-left: 3px; }
.dimcut svg { width: 20px; height: 32px; }
.c-work { width: 174px; }
.lyicon { width: 41px; }
.c-layer { width: 298px; }
.cbicons { flex: 1; display: flex; align-items: center; gap: 1px; padding-left: 4px; }
.zero { padding-left: 3px; flex: none; }
.swatch { width: 10px; height: 10px; border: 1px solid #333; background: #fff; display: inline-block; margin-right: 4px; flex: none; }
.cbicons .swatch { margin-right: 0; }
.c-color { width: 149px; margin-left: 2px; }
.c-color .cbtext { padding-left: 4px; }
.c-lt { width: 158px; margin-left: 7px; }
.c-lw { width: 124px; margin-left: 8px; }
.lw { padding-left: 3px; }
.ln { display: block; height: 1px; background: #222; margin-right: 6px; flex: none; }
.l1 { width: 60px; }
.l2 { width: 35px; }
.c-plot { width: 80px; margin-left: 8px; background: #ececec; color: #a8a8a8; border-color: #e0e0e0; }
.c-dim { width: 119px; }
.centered2 { padding-left: 17px; }
.brushd { width: 37px; margin-left: 1px; }

/* main */
.main { height: 499px; display: flex; padding: 5px 7px 0 5px; gap: 6px; flex: none; }
.vbar { width: 39px; height: 492px; overflow: hidden; background: #ececec; flex: none; display: flex; flex-direction: column; align-items: center; }
.vgrip { width: 100%; height: 9px; background: #5b5b5b; flex: none; padding: 3px 10px; }
.vgrip::before { content: ""; display: block; width: 16px; height: 3px; background: repeating-linear-gradient(90deg, #a8a8a8 0 1px, transparent 1px 2px); }
.v { height: 38.200px; width: 100%; display: flex; align-items: center; justify-content: center; flex: none; }
.v svg { width: 32px; height: 32px; fill: none; stroke: #4e4e4e; stroke-width: 1.200; display: block; overflow: visible; }
.center { width: 1174px; flex: none; display: flex; flex-direction: column; margin-top: 2px; }
.canvasrow { display: flex; height: 471px; flex: none; }
.canvas { width: 1157px; background: #000; flex: none; }
.drawing { display: block; }
.small { font: 20.800px "Liberation Sans", sans-serif; stroke-width: .35px; }
.big { font: 55.500px "Liberation Sans", sans-serif; stroke-width: .9px; }
.la1 { fill: #00ff00; stroke: #00ff00; }
.la2 { fill: #ffff00; stroke: #ffff00; }
.la3 { fill: #ff00ff; stroke: #ff00ff; }
.la4 { fill: #ffb000; stroke: #ffb000; }
.la5 { fill: #ff7f9f; stroke: #ff7f9f; }
.la6 { fill: #0000ff; stroke: #0000ff; }
.la7 { fill: #9a00cc; stroke: #9a00cc; }
.tealt { fill: #62cad6; stroke: #62cad6; }
.roset { fill: #cc3366; stroke: #cc3366; }
.ucs path, .ucs rect { fill: none; stroke: #e6e6e6; stroke-width: 1.200; }
.cross path, .cross rect { fill: none; stroke: #c8c8c8; stroke-width: 1.200; }

.vscroll { width: 17px; background: linear-gradient(90deg, #fff, #f0f0f6 70%, #dcdce6); display: flex; flex-direction: column; align-items: center; }
.sb { width: 16px; height: 16px; flex: none; display: flex; align-items: center; justify-content: center; background: linear-gradient(#f2f2f7, #c4c6d4); border: 1px solid #b1b1bd; border-radius: 2px; }
.sb svg { display: block; }
.sb.sm { width: 15px; height: 15px; }
.thumb { width: 16px; height: 16px; flex: none; display: flex; align-items: center; justify-content: center; background: linear-gradient(#f8f8fb, #dcdde5); border: 1px solid #b8b8c4; border-radius: 2px; }
.tv1 { margin-top: 108px; margin-bottom: auto; }

.tabrow { height: 17px; display: flex; background: linear-gradient(#f8f8fb, #dcdde2); flex: none; font: 11.300px "Liberation Sans", sans-serif; color: #222; }
.tabnav { width: 63px; display: flex; align-items: center; background: #e2e2e6; flex: none; }
.tabs { display: flex; padding-left: 3px; width: 700px; flex: none; isolation: isolate; }
.tab { position: relative; padding: 0 8px; height: 17px; line-height: 17px; margin-right: 1px; }
.tab::before { content: ""; position: absolute; inset: 0; z-index: -1; transform: skewX(-22deg); background: #dcdcdf; border-right: 1px solid #777; }
.tab.active { padding: 0 7px; color: #000; }
.tab.active::before { background: #fff; border-left: 5px solid #000; border-right: 2px solid #000; }
.hscroll { width: 394px; margin-left: -1px; display: flex; align-items: center; background: linear-gradient(#fff, #e8e8f0); padding-left: 5px; padding-right: 1px; flex: none; }
.th1 { margin-left: 194px; margin-right: auto; }
.corner { flex: 1; }

/* command window */
.cmd { height: 59px; margin-top: 1px; display: flex; padding-left: 5px; padding-right: 4px; flex: none; }
.cmdgrip { width: 15px; background: #a8a8a8; flex: none; padding: 3px 2px; }
.cmdgrip::before { content: ""; display: block; width: 11px; height: 3px; background: repeating-linear-gradient(90deg, #efefef 0 1px, transparent 1px 2px); }
.cmdbody { flex: 1; background: #fff; display: flex; flex-direction: column; font: 13.330px/16px "Liberation Mono", monospace; color: #1c1c1c; min-width: 0; }
.cmdhist { height: 40px; padding: 1px 0 0 1px; border-bottom: 2px solid #c6c6c6; flex: none; }
.cmdline { flex: 1; display: flex; justify-content: space-between; align-items: center; padding-left: 1px; }
.cmdh { display: flex; align-items: center; width: 64px; gap: 4px; margin-right: 0; }
.th2 { width: 15px; height: 15px; margin-right: auto; }
.cmdv { width: 19px; background: #f4f4f6; display: flex; flex-direction: column; gap: 5px; align-items: center; padding: 3px 0 0 0; flex: none; }

/* status bar */
.status { height: 20px; display: flex; align-items: stretch; padding-left: 5px; background: linear-gradient(#7d7d7d, #a8a8a8); font: 12px "Liberation Sans", sans-serif; color: #222; flex: none; overflow: hidden; }
.coords { width: 194px; padding-left: 11px; line-height: 22px; letter-spacing: -.55px; color: #242424; white-space: nowrap; flex: none; }
.sgroup { display: flex; width: 222px; flex: none; }
.s { width: 22px; height: 20px; display: flex; align-items: center; justify-content: center; background: linear-gradient(#cfcfcf, #b9b9b9); border-right: 1px solid #989898; flex: none; }
.s.on { background: linear-gradient(#d8edf8, #9bd0ec); }
.s svg { width: 18px; height: 18px; fill: none; stroke: #3c3c3c; stroke-width: 1; display: block; }
.sright { margin-left: 369px; display: flex; align-items: center; flex: 1; font-size: 13.500px; }
.s.m { background: linear-gradient(#bdbdbd, #adadad); border-right-color: transparent; width: 22px; }
.gapd { height: 100%; background: #808080; flex: none; }
.g13 { width: 13px; }
.g12 { width: 12px; }
.g8 { width: 8px; }
.scale { width: 27px; height: 100%; background: #b4b4b4; display: flex; align-items: center; gap: 2px; color: #222; flex: none; font-size: 12.500px; letter-spacing: -.3px; }
.tri { width: 0; height: 0; border-left: 4px solid transparent; border-right: 4px solid transparent; border-top: 5px solid #111; flex: none; }
.tri.dark { margin: 0 2px 0 6px; }
.wsname { width: 113px; height: 100%; background: #b4b4b4; display: flex; align-items: center; white-space: nowrap; letter-spacing: -.45px; color: #1e1e1e; flex: none; font-size: 12.400px; }
.wsname svg { flex: none; }
.wsname .tri { margin-left: 2px; }
.lock { margin-left: 2px; }
.tray { width: 27px; height: 100%; margin-left: 8px; background: #a7a7a7; display: flex; align-items: center; justify-content: center; flex: none; }
.s.m.clean { width: 20px; }
.sizegrip { flex: 1; }
```
